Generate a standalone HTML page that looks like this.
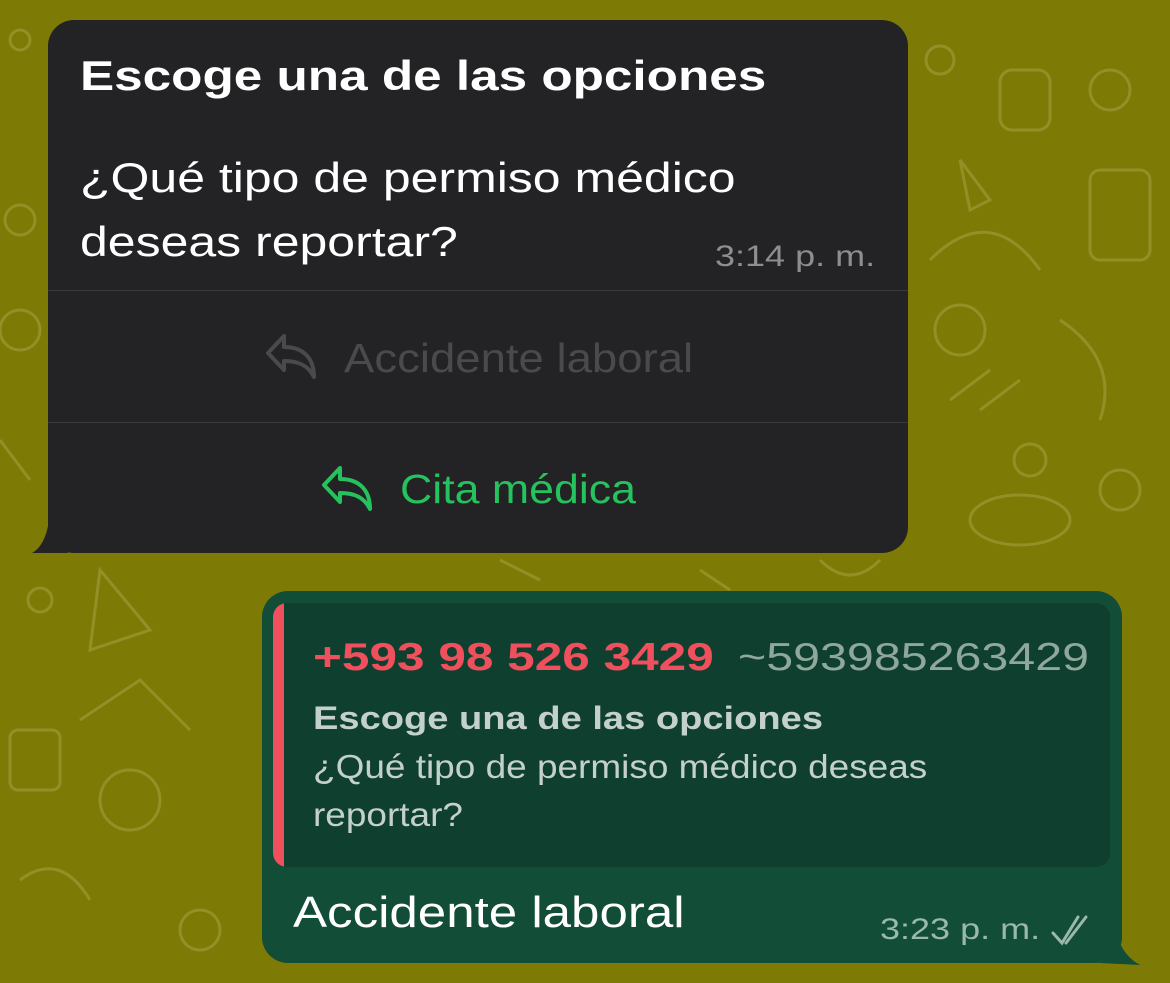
<!DOCTYPE html><html><head><meta charset="utf-8"><style>
body{margin:0;width:1170px;height:983px;background:#7d7a05;font-family:"Liberation Sans",sans-serif;position:relative;overflow:hidden}
.a{position:absolute;white-space:nowrap;transform-origin:0 0}
</style></head><body>
<svg class="a" style="left:0;top:0" width="1170" height="983">
<g fill="none" stroke="#9a9630" stroke-width="3" opacity=".8">
<circle cx="20" cy="40" r="10"/><circle cx="940" cy="60" r="14"/><rect x="1000" y="70" width="50" height="60" rx="12"/><circle cx="1110" cy="90" r="20"/><path d="M960 160l30 40-20 10z"/><rect x="1090" y="170" width="60" height="90" rx="10"/><path d="M930 260q60-60 110 10"/><circle cx="960" cy="330" r="25"/><path d="M1060 320q60 40 40 100"/><path d="M950 400l40-30M980 410l40-30"/><circle cx="1030" cy="460" r="16"/><ellipse cx="1020" cy="520" rx="50" ry="25"/><circle cx="1120" cy="490" r="20"/><path d="M100 570l50 60-60 20z"/><circle cx="40" cy="600" r="12"/><path d="M80 720l60-40 50 50"/><rect x="10" y="730" width="50" height="60" rx="8"/><circle cx="130" cy="800" r="30"/><path d="M20 880q40-30 70 20"/><circle cx="200" cy="930" r="20"/><path d="M500 560l40 20M700 570l30 20M820 560q30 30 60 0"/><circle cx="20" cy="220" r="15"/><circle cx="20" cy="330" r="20"/><path d="M0 440l30 40"/>
</g></svg>
<svg class="a" style="left:28px;top:510px" width="50" height="50"><path d="M40 0 L40 43 L4 43 Q20 34 22 0z" fill="#232325"/></svg>
<div class="a" style="left:48px;top:20px;width:860px;height:533px;background:#232325;border-radius:26px"></div>
<div class="a" style="left:80px;top:52px;font-size:42px;font-weight:bold;color:#fff;transform:scaleX(1.22)">Escoge una de las opciones</div>
<div class="a" style="left:80px;top:146px;font-size:42px;line-height:64px;color:#fff;transform:scaleX(1.19)">¿Qué tipo de permiso médico<br>deseas reportar?</div>
<div class="a" style="left:715px;top:240px;font-size:30px;color:#8e8e92;transform:scaleX(1.2)">3:14 p. m.</div>
<div class="a" style="left:48px;top:290px;width:860px;height:1px;background:#3a3a3c"></div>
<div class="a" style="left:48px;top:422px;width:860px;height:1px;background:#3a3a3c"></div>
<svg class="a" style="left:264px;top:333px" width="56" height="48" viewBox="0 0 56 48"><path d="M20 3L4 20l16 17V28c14 0 24 4 30 16 0-16-8-30-30-30V3z" fill="none" stroke="#4a4a4c" stroke-width="4" stroke-linejoin="round"/></svg>
<div class="a" style="left:344px;top:335px;font-size:41px;color:#4a4a4c;transform:scaleX(1.11)">Accidente laboral</div>
<svg class="a" style="left:320px;top:465px" width="56" height="48" viewBox="0 0 56 48"><path d="M20 3L4 20l16 17V28c14 0 24 4 30 16 0-16-8-30-30-30V3z" fill="none" stroke="#25c35e" stroke-width="4" stroke-linejoin="round"/></svg>
<div class="a" style="left:400px;top:466px;font-size:41px;color:#25c35e;transform:scaleX(1.09)">Cita médica</div>
<svg class="a" style="left:1100px;top:925px" width="45" height="45"><path d="M0 0 L16 0 Q18 28 40 40 L0 38z" fill="#124d38"/></svg>
<div class="a" style="left:262px;top:591px;width:860px;height:372px;background:#124d38;border-radius:26px"></div>
<div class="a" style="left:273px;top:603px;width:837px;height:264px;background:#0f3f2e;border-radius:14px;overflow:hidden"><div style="width:11px;height:100%;background:#f0505e"></div></div>
<div class="a" style="left:313px;top:636px;font-size:39px;font-weight:bold;color:#f0505e;transform:scaleX(1.27)">+593 98 526 3429</div>
<div class="a" style="left:738px;top:636px;font-size:39px;color:#8fa79d;transform:scaleX(1.24)">~593985263429</div>
<div class="a" style="left:313px;top:700px;font-size:32px;font-weight:bold;color:#c4d0cb;transform:scaleX(1.19)">Escoge una de las opciones</div>
<div class="a" style="left:313px;top:743px;font-size:33px;line-height:48px;color:#c4d0cb;transform:scaleX(1.12)">¿Qué tipo de permiso médico deseas<br>reportar?</div>
<div class="a" style="left:293px;top:888px;font-size:44px;color:#fff;transform:scaleX(1.16)">Accidente laboral</div>
<div class="a" style="left:880px;top:913px;font-size:30px;color:#9ab8ab;transform:scaleX(1.2)">3:23 p. m.</div>
<svg class="a" style="left:1050px;top:913px" width="42" height="34"><path d="M3 20l9 10 16-26M16 30l20-26" fill="none" stroke="#9ab8ab" stroke-width="3" stroke-linecap="round"/></svg>
</body></html>
